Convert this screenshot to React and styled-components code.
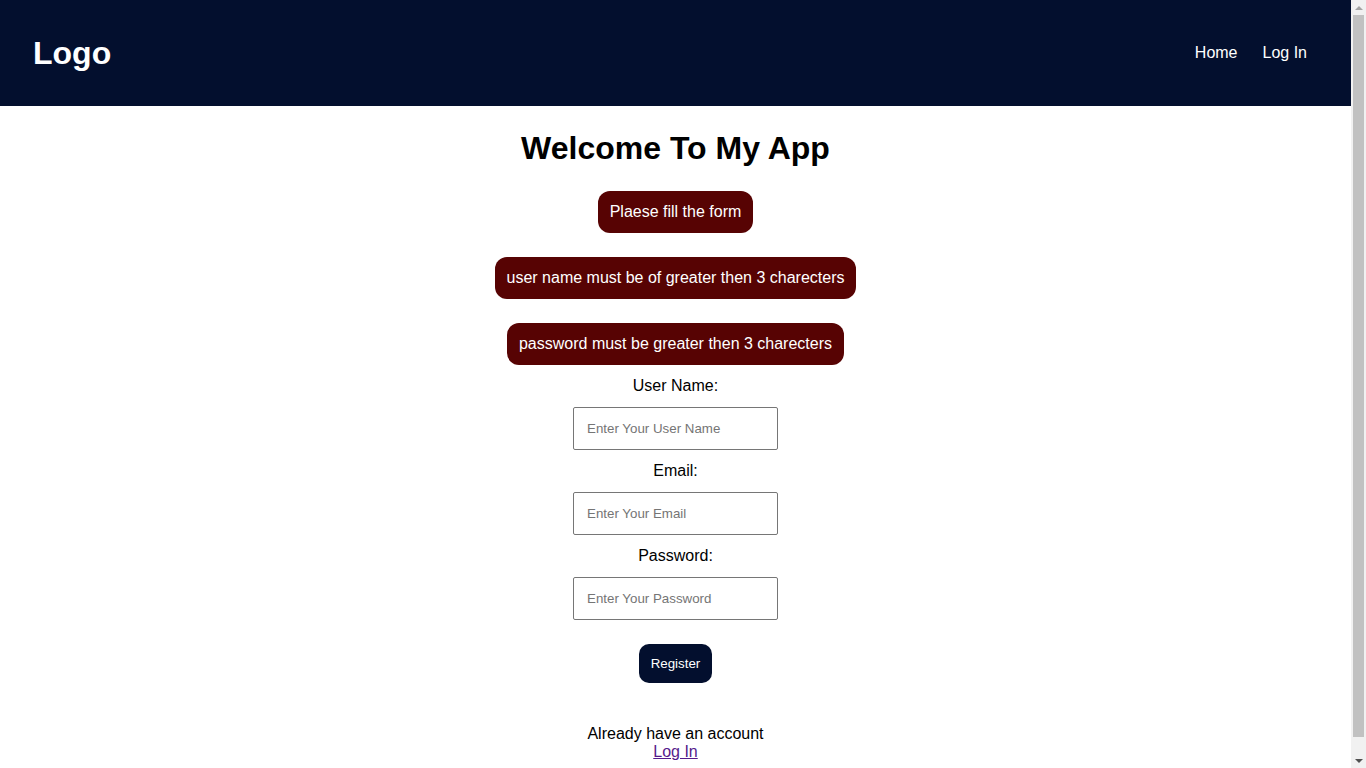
import React from 'react'
import styled, { createGlobalStyle } from 'styled-components'

const GlobalStyle = createGlobalStyle`
    html, body {
        margin: 0;
        padding: 0;
    }
    body {
        font-family: "Liberation Sans", Arial, sans-serif;
        color: #000;
        background: #fff;
        margin-right: 15px;
    }
`

const Nav = styled.nav`
    height: 106px;
    background: #030f2e;
    display: flex;
    align-items: center;
    justify-content: space-between;
    padding: 0 44px 0 33px;
`

const Logo = styled.div`
    color: #fff;
    font-size: 32px;
    font-weight: bold;
`

const NavLinks = styled.div`
    display: flex;
    gap: 25px;

    & > a {
        color: #fff;
        font-size: 16px;
        text-decoration: none;
    }
`

const Main = styled.main`
    display: flex;
    flex-direction: column;
    align-items: center;
    padding-bottom: 25px;
`

const Title = styled.h1`
    margin: 24px 0 12px 0;
    font-size: 32px;
    font-weight: bold;
    line-height: 37px;
`

const Alert = styled.div`
    margin: 12px 0;
    padding: 0 12px;
    height: 42px;
    display: flex;
    align-items: center;
    background: #570303;
    color: #fff;
    font-size: 16px;
    border-radius: 12px;
`

const Label = styled.label`
    font-size: 16px;
    line-height: normal;
    margin-top: ${(p) => (p.$first ? '0' : '12px')};
    margin-bottom: 12px;
`

const Input = styled.input`
    box-sizing: border-box;
    width: 205px;
    height: 43px;
    padding: 0 13px;
    border: 1px solid #767676;
    border-radius: 2px;
    font-family: "Liberation Sans", Arial, sans-serif;
    font-size: 13.33px;
    outline: none;

    &::placeholder {
        color: #757575;
    }
`

const RegisterButton = styled.button`
    margin-top: 24px;
    height: 39px;
    padding: 0 12px;
    border: none;
    border-radius: 10px;
    background: #030f2e;
    color: #fff;
    font-family: "Liberation Sans", Arial, sans-serif;
    font-size: 13.33px;
    cursor: pointer;
`

const Footer = styled.div`
    margin-top: 42px;
    text-align: center;
    font-size: 16px;
    line-height: 18px;

    & > a {
        color: #551a8b;
        text-decoration: underline;
    }
`

/* window scrollbar as it shows in the screenshot */
const ScrollBar = styled.div`
    position: fixed;
    top: 0;
    right: 0;
    bottom: 0;
    width: 15px;
    background: #f1f1f1;
    display: flex;
    flex-direction: column;
    align-items: center;
`

const Arrow = styled.div`
    height: 15px;
    display: flex;
    align-items: center;
    justify-content: center;

    &::after {
        content: '';
        border-left: 4px solid transparent;
        border-right: 4px solid transparent;
        ${(p) =>
            p.$up
                ? 'border-bottom: 4px solid #a3a3a3;'
                : 'border-top: 4px solid #505050;'}
    }
`

const Thumb = styled.div`
    width: 11px;
    height: 722px;
    background: #c1c1c1;
`

const Track = styled.div`
    flex: 1;
`

const alerts = [
    'Plaese fill the form',
    'user name must be of greater then 3 charecters',
    'password must be greater then 3 charecters',
]

const fields = [
    { label: 'User Name:', placeholder: 'Enter Your User Name', type: 'text' },
    { label: 'Email:', placeholder: 'Enter Your Email', type: 'email' },
    { label: 'Password:', placeholder: 'Enter Your Password', type: 'password' },
]

export default function App() {
    return (
        <>
            <GlobalStyle />
            <Nav>
                <Logo>Logo</Logo>
                <NavLinks>
                    <a href="#">Home</a>
                    <a href="#">Log In</a>
                </NavLinks>
            </Nav>
            <Main>
                <Title>Welcome To My App</Title>
                {alerts.map((a) => (
                    <Alert key={a}>{a}</Alert>
                ))}
                {fields.map((f, i) => (
                    <React.Fragment key={f.label}>
                        <Label $first={i === 0}>{f.label}</Label>
                        <Input type={f.type} placeholder={f.placeholder} />
                    </React.Fragment>
                ))}
                <RegisterButton>Register</RegisterButton>
                <Footer>
                    Already have an account
                    <br />
                    <a href="#">Log In</a>
                </Footer>
            </Main>
            <ScrollBar>
                <Arrow $up />
                <Thumb />
                <Track />
                <Arrow />
            </ScrollBar>
        </>
    )
}
